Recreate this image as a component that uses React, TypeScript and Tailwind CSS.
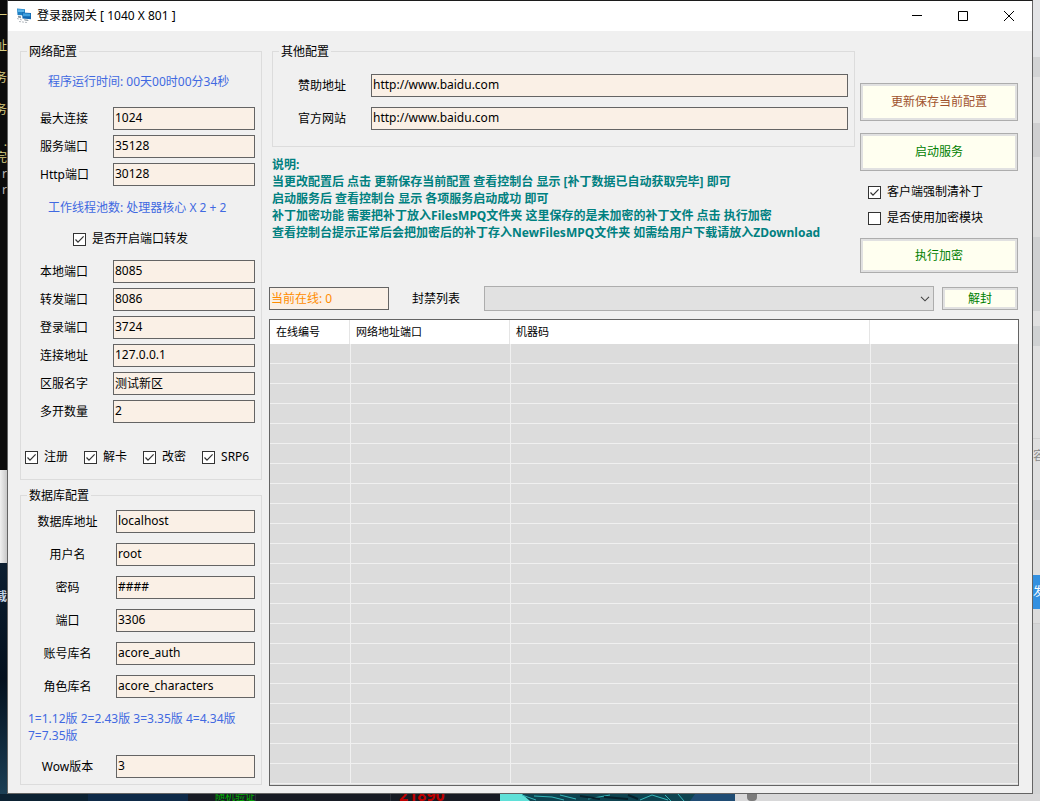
import { useId, type ReactNode } from "react";
import clsx from "clsx";

const networkFields = [
  { label: "最大连接", value: "1024" },
  { label: "服务端口", value: "35128" },
  { label: "Http端口", value: "30128" },
];

const forwardFields = [
  { label: "本地端口", value: "8085" },
  { label: "转发端口", value: "8086" },
  { label: "登录端口", value: "3724" },
  { label: "连接地址", value: "127.0.0.1" },
  { label: "区服名字", value: "测试新区" },
  { label: "多开数量", value: "2" },
];

const databaseFields = [
  { label: "数据库地址", value: "localhost" },
  { label: "用户名", value: "root" },
  { label: "密码", value: "####" },
  { label: "端口", value: "3306" },
  { label: "账号库名", value: "acore_auth" },
  { label: "角色库名", value: "acore_characters" },
];

const siteFields = [
  { label: "赞助地址", value: "http://www.baidu.com" },
  { label: "官方网站", value: "http://www.baidu.com" },
];

const notes = [
  "说明:",
  "当更改配置后 点击 更新保存当前配置 查看控制台 显示 [补丁数据已自动获取完毕] 即可",
  "启动服务后 查看控制台 显示 各项服务启动成功 即可",
  "补丁加密功能 需要把补丁放入FilesMPQ文件夹 这里保存的是未加密的补丁文件 点击 执行加密",
  "查看控制台提示正常后会把加密后的补丁存入NewFilesMPQ文件夹 如需给用户下载请放入ZDownload",
];

const consoleLines = ["—", "", "址", "", "务", "", "务", "", ".", "完", "r", "r"];
const emptyRows = Array.from({ length: 22 }, (_, i) => i);

function Field({ label, value, centered }: { label: string; value: string; centered?: boolean }) {
  const id = useId();
  return (
    <div className="flex items-center">
      <label
        htmlFor={id}
        className={clsx("shrink-0", centered ? "mr-1.5 w-[85px] text-center" : "w-[73px] ml-[15px]")}
      >
        {label}
      </label>
      <input
        id={id}
        defaultValue={value}
        className="h-[23px] min-w-0 flex-1 border border-[#646464] bg-[#faf0e6] px-px pb-0.5 outline-none"
      />
    </div>
  );
}

function Check({ children, checked }: { children: ReactNode; checked?: boolean }) {
  return (
    <label className="flex h-4 items-center gap-1.5 whitespace-nowrap">
      <span className="grid">
        <input
          type="checkbox"
          defaultChecked={checked}
          className="peer col-start-1 row-start-1 size-[13px] appearance-none border border-[#333] bg-white"
        />
        <svg
          viewBox="0 0 13 13"
          className="pointer-events-none col-start-1 row-start-1 hidden size-[13px] peer-checked:block"
        >
          <path d="M2.5 6.5 5 9.2 10.6 3.4" fill="none" stroke="#333" strokeWidth="1.2" />
        </svg>
      </span>
      {children}
    </label>
  );
}

function Group({ title, className, children }: { title: string; className?: string; children: ReactNode }) {
  return (
    <fieldset className={clsx("min-w-0 border border-[#dcdcdc] px-1", className)}>
      <legend className="ml-0.5 h-[17px] px-0.5 leading-[17px]">{title}</legend>
      {children}
    </fieldset>
  );
}

function ActionButton({ className, children }: { className: string; children: ReactNode }) {
  return (
    <button
      type="button"
      className={clsx(
        "border border-[#adadad] bg-[#fffff0] inset-ring-2 inset-ring-[#e1e1e1]",
        className,
      )}
    >
      {children}
    </button>
  );
}

function AppIcon() {
  return (
    <svg viewBox="0 0 16 16" className="size-4">
      <path d="M1 .5 9 1.2v6.4L1.5 7z" fill="#1d7fc4" />
      <path d="M1.6 1.2 8.2 1.8v2.2L1.8 4z" fill="#5cb4e8" />
      <path d="M6 4.5 15 5.1v6.2L6.5 10.6z" fill="#0f66b0" />
      <path d="M6.8 5.3 14.2 5.8v2.4L7 8.2z" fill="#3fa0de" />
      <path d="M2 7.8 5 8.2v2l-3-.8zM8 11.2l4 .5.6 1.2-4-.4z" fill="#8d979e" />
      <path d="M1 10.5l5 1.5M3 13.5l9 1.2" stroke="#b4bac0" strokeDasharray="2 1" />
    </svg>
  );
}

function TitleBar() {
  return (
    <header className="flex h-[30px] items-center bg-white pl-2">
      <AppIcon />
      <h1 className="ml-[5px] flex-1">登录器网关 [ 1040 X 801 ]</h1>
      <button type="button" aria-label="最小化" className="grid h-full w-[46px] place-items-center">
        <svg viewBox="0 0 10 10" className="size-2.5">
          <path d="M0 4.5h10" stroke="#000" />
        </svg>
      </button>
      <button type="button" aria-label="最大化" className="grid h-full w-[46px] place-items-center">
        <svg viewBox="0 0 10 10" className="size-2.5">
          <path d="M.5.5h9v9h-9z" fill="none" stroke="#000" />
        </svg>
      </button>
      <button type="button" aria-label="关闭" className="grid h-full w-[46px] place-items-center">
        <svg viewBox="0 0 10 10" className="size-2.5">
          <path d="M0 0 10 10M10 0 0 10" stroke="#000" />
        </svg>
      </button>
    </header>
  );
}

function Sidebar() {
  return (
    <div className="flex w-[242px] shrink-0 flex-col gap-[7px]">
      <Group title="网络配置" className="pb-3.5">
        <p className="mt-3.5 h-4 pl-[23px] leading-4 text-[#4169e1]">程序运行时间: 00天00时00分34秒</p>
        <div className="mt-[17px] flex flex-col gap-[5px] pr-0.5">
          {networkFields.map((f) => (
            <Field key={f.label} {...f} />
          ))}
        </div>
        <p className="mt-3.5 h-4 pl-[23px] leading-4 text-[#4169e1]">工作线程池数: 处理器核心 X 2 + 2</p>
        <div className="mt-[15px] pl-12">
          <Check checked>是否开启端口转发</Check>
        </div>
        <div className="mt-[13px] flex flex-col gap-[5px] pr-0.5">
          {forwardFields.map((f) => (
            <Field key={f.label} {...f} />
          ))}
        </div>
        <div className="mt-[26px] flex gap-4">
          <Check checked>注册</Check>
          <Check checked>解卡</Check>
          <Check checked>改密</Check>
          <Check checked>SRP6</Check>
        </div>
      </Group>
      <Group title="数据库配置" className="pb-1.5">
        <div className="mt-1.5 flex flex-col gap-2.5 pr-0.5">
          {databaseFields.map((f) => (
            <Field key={f.label} {...f} centered />
          ))}
        </div>
        <p className="mt-3 pl-[3px] leading-[17px] text-[#4169e1]">
          1=1.12版 2=2.43版 3=3.35版 4=4.34版 7=7.35版
        </p>
        <div className="mt-[11px] pr-0.5">
          <Field label="Wow版本" value="3" centered />
        </div>
      </Group>
    </div>
  );
}

function OnlineTable() {
  return (
    <div className="flex-1 border border-[#646464] bg-[#dcdcdc]">
      <table className="w-full table-fixed border-separate border-spacing-0 text-[11px]">
        <colgroup>
          <col className="w-20" />
          <col className="w-40" />
          <col className="w-90" />
          <col />
        </colgroup>
        <thead>
          <tr className="h-6 bg-white text-left">
            <th className="border-r border-[#e5e5e5] p-0 pl-1.5 font-normal">在线编号</th>
            <th className="border-r border-[#e5e5e5] p-0 pl-1.5 font-normal">网络地址端口</th>
            <th className="border-r border-[#e5e5e5] p-0 pl-1.5 font-normal">机器码</th>
            <td />
          </tr>
        </thead>
        <tbody>
          {emptyRows.map((row) => (
            <tr key={row} className="h-5">
              <td className="border-b border-[#f0f0f0] p-0" />
              <td className="border-b border-l border-[#f0f0f0] p-0" />
              <td className="border-b border-l border-[#f0f0f0] p-0" />
              <td className="border-b border-l border-[#f0f0f0] p-0" />
            </tr>
          ))}
        </tbody>
      </table>
    </div>
  );
}

function MainPanel() {
  return (
    <main className="flex min-w-0 flex-1 flex-col">
      <div className="flex gap-[5px] pr-px pl-[3px]">
        <div className="min-w-0 flex-1">
          <Group title="其他配置" className="pb-4">
            <div className="mt-3.5 flex flex-col gap-2.5 pr-0.5 pl-1.5">
              {siteFields.map((f) => (
                <Field key={f.label} {...f} />
              ))}
            </div>
          </Group>
          <div className="mt-[9px] leading-[17px] font-bold whitespace-nowrap text-[#008080]">
            {notes.map((line) => (
              <p key={line}>{line}</p>
            ))}
          </div>
        </div>
        <div className="flex w-[158px] shrink-0 flex-col pt-10">
          <ActionButton className="h-[38px] text-[#a0522d]">更新保存当前配置</ActionButton>
          <ActionButton className="mt-3 h-[38px] text-[#008000]">启动服务</ActionButton>
          <div className="mt-[13px] flex flex-col gap-2.5 pl-2">
            <Check checked>客户端强制清补丁</Check>
            <Check>是否使用加密模块</Check>
          </div>
          <ActionButton className="mt-3 h-[35px] text-[#008000]">执行加密</ActionButton>
        </div>
      </div>

      <div className="mt-[13px] mb-2 flex items-center pr-px">
        <input
          readOnly
          aria-label="当前在线"
          value="当前在线: 0"
          className="h-[23px] w-[120px] border border-[#646464] bg-[#faf0e6] px-px pb-0.5 text-[#ff8c00] outline-none"
        />
        <label htmlFor="ban-list" className="ml-[23px] w-[72px]">
          封禁列表
        </label>
        <div className="relative flex-1">
          <select
            id="ban-list"
            className="block h-[25px] w-full appearance-none border border-[#adadad] bg-[#e1e1e1] px-1 outline-none"
          >
            <option value="" />
          </select>
          <svg viewBox="0 0 10 6" className="pointer-events-none absolute top-[10px] right-1 h-1.5 w-2.5">
            <path d="M1 .8 5 4.8 9 .8" fill="none" stroke="#444" strokeWidth="1.1" />
          </svg>
        </div>
        <ActionButton className="ml-2 h-[23px] w-[76px] text-[#008000]">解封</ActionButton>
      </div>

      <OnlineTable />
    </main>
  );
}

// slivers of the programs that sit behind the window
function LeftBackdrop() {
  return (
    <div className="flex w-[7px] shrink-0 flex-col overflow-hidden" aria-hidden="true">
      <div className="flex-[464_0_0] bg-[#0c0c0c] pt-1.5 leading-4 text-[#d8cc80]">
        {consoleLines.map((line, i) => (
          <div key={i} className={clsx("flex h-4 justify-end", line === "r" && "text-[#b8b8b8]")}>
            {line}
          </div>
        ))}
      </div>
      <div className="flex-[93_0_0] bg-linear-to-r from-[#f0f0f0] to-[#c8c8c8]" />
      <div className="flex-[205_0_0] bg-linear-to-b from-[#0c1e30] via-[#04101e] to-[#1c3f55] pt-[26px]">
        <div className="flex justify-end leading-4 font-bold text-[#c5d5e8]">载</div>
      </div>
    </div>
  );
}

function RightBackdrop() {
  return (
    <div className="flex w-[7px] shrink-0 flex-col overflow-hidden" aria-hidden="true">
      <div className="flex-[57_0_0] bg-[#e3e4e6]" />
      <div className="flex-[20_0_0] bg-[#d2d3d4]" />
      <div className="flex-[46_0_0] bg-[#e0e0e0]" />
      <div className="flex-[34_0_0] bg-[#cfcfd0]" />
      <div className="flex-[80_0_0] bg-[#dcdcdc]" />
      <div className="flex-[74_0_0] bg-[#cfd0d1]" />
      <div className="flex-[15_0_0] bg-[#e0e0e0]" />
      <div className="flex-[20_0_0] bg-[#cfd1d2]" />
      <div className="flex-[92_0_0] bg-[#e0e0e0]" />
      <div className="flex flex-[61_0_0] items-start border-t border-[#d0d0d0] bg-[#e0e0e0] leading-[34px] text-[#888]">
        容
      </div>
      <div className="flex-[20_0_0] bg-[#d0d1d3]" />
      <div className="flex-[55_0_0] bg-[#dedede]" />
      <div className="flex flex-[34_0_0] items-center bg-[#3390e0] text-white">发</div>
      <div className="flex-[14_0_0] border-b border-[#ccc] bg-[#dcdcdc]" />
      <div className="flex-[170_0_0] bg-[#d4d5d6]" />
    </div>
  );
}

function BottomBackdrop() {
  return (
    <div className="flex h-[7px] overflow-hidden leading-[10px]" aria-hidden="true">
      <div className="flex-[88_0_0] bg-[#0c2233]" />
      <div className="flex-[100_0_0] bg-[#0e2a48]" />
      <div className="flex flex-[67_0_0] items-end justify-end border-r border-[#2b2f38] bg-[#171b24] text-[10px] text-[#00b400]">
        随机验证
      </div>
      <div className="flex-[134_0_0] border-r border-[#2b2f38] bg-[#171b24]" />
      <div className="flex flex-[101_0_0] items-end bg-[#171b24] pl-2 text-base leading-3 font-bold text-[#c00000]">
        21890
      </div>
      <svg viewBox="0 0 235 7" preserveAspectRatio="none" className="h-[7px] min-w-0 flex-[235_0_0]">
        <path d="M0 0h235v7H0z" fill="#0e4350" />
        <path d="M0 0h22l8 7H0z" fill="#5fe0d8" />
        <path d="M195 0h40v7h-45z" fill="#1f4c74" />
        <path
          d="M22 1l14 5M34 2l18 1 12 3M60 1l16 4M88 5l22-4M140 6l12-5 16 5M165 1l6 6M178 0l6 7"
          fill="none"
          stroke="#35b5b8"
        />
        <path d="M80 2l20 3M104 3l24 2M128 1l10 4" stroke="#06202b" strokeWidth="2" />
      </svg>
      <div className="flex flex-[293_0_0] bg-[#d8d8d9] pl-3">
        <div className="w-[10px] rounded-b bg-[#7c7c7c]" />
      </div>
    </div>
  );
}

export default function App() {
  return (
    <div className="flex min-h-screen flex-col font-['Noto_Sans','Noto_Sans_CJK_SC',sans-serif] text-xs text-black">
      <div className="flex flex-1">
        <LeftBackdrop />
        <div className="flex min-w-0 flex-1 flex-col border border-[#646464] border-t-[#1c1c1c] bg-[#f0f0f0]">
          <TitleBar />
          <div className="flex flex-1 gap-[7px] pt-3 pr-[13px] pb-[7px] pl-3">
            <Sidebar />
            <MainPanel />
          </div>
        </div>
        <RightBackdrop />
      </div>
      <BottomBackdrop />
    </div>
  );
}
